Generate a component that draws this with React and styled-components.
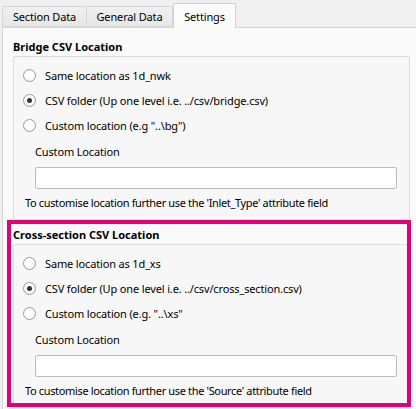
import React from "react";
import styled, { createGlobalStyle } from "styled-components";

const Global = createGlobalStyle`
  html, body {
    margin: 0;
    padding: 0;
    background: #f0f0f0;
  }
  body {
    font-family: "Noto Sans", "Liberation Sans", sans-serif;
    font-size: 11px;
    letter-spacing: -0.15px;
    color: #000;
    overflow: hidden;
  }
`;

const TabBar = styled.div`
  display: flex;
  align-items: flex-end;
  height: 27px;
  padding-left: 2px;
`;

const Tab = styled.div`
  box-sizing: border-box;
  width: ${(p) => p.$w}px;
  height: ${(p) => (p.$active ? "25px" : "21px")};
  margin-bottom: ${(p) => (p.$active ? "-1px" : "0")};
  display: flex;
  align-items: center;
  justify-content: center;
  border: 1px solid ${(p) => (p.$active ? "#cfcfcf" : "#d6d6d6")};
  border-bottom: ${(p) => (p.$active ? "none" : "1px solid #d6d6d6")};
  border-left: ${(p) => (p.$first || p.$active ? "" : "none")};
  border-radius: 2px 2px 0 0;
  background: ${(p) =>
    p.$active ? "#fbfbfb" : "linear-gradient(#f0f0f0, #e7e7e7)"};
  position: relative;
  z-index: ${(p) => (p.$active ? 1 : 0)};
  white-space: nowrap;
`;

const Pane = styled.div`
  margin-left: 2px;
  border-top: 1px solid #d6d6d6;
  border-left: 1px solid #d6d6d6;
  background: #fafafa;
  min-height: calc(100vh - 28px);
  padding: 11px 6px 0 10px;
  display: flex;
  flex-direction: column;
  gap: 7px;
`;

const Section = styled.section`
  position: relative;
`;

const Heading = styled.div`
  font-weight: bold;
  letter-spacing: 0;
  line-height: 15px;
  height: 15px;
  margin-bottom: 2px;
`;

const GroupBox = styled.div`
  border: 1px solid #dcdcdc;
  border-radius: 2px;
  background: #f7f7f7;
  padding: 6px 12px 9px 9px;
`;

const RadioRow = styled.label`
  display: flex;
  align-items: center;
  height: 25px;
  gap: 9px;
  white-space: nowrap;
`;

const RadioCircle = styled.span`
  box-sizing: border-box;
  width: 13px;
  height: 13px;
  border-radius: 50%;
  border: 1px solid #9a9a9a;
  background: radial-gradient(circle at 50% 40%, #ffffff 55%, #ececec);
  display: flex;
  align-items: center;
  justify-content: center;
  flex: none;

  &::after {
    content: "";
    width: 5px;
    height: 5px;
    border-radius: 50%;
    background: #333;
    display: ${(p) => (p.$checked ? "block" : "none")};
  }
`;

const CustomBlock = styled.div`
  margin-left: 12px;
  padding-top: 6px;
`;

const FieldLabel = styled.div`
  line-height: 15px;
  margin-bottom: 8px;
`;

const TextInput = styled.input`
  box-sizing: border-box;
  display: block;
  width: 100%;
  height: 22px;
  border: 1px solid #bcbcbc;
  border-radius: 2px;
  background: #fff;
  margin: 0;
  outline: none;
`;

const Note = styled.div`
  margin-left: 2px;
  margin-top: 6px;
  line-height: 15px;
  letter-spacing: -0.35px;
  white-space: nowrap;
`;

const Highlight = styled.div`
  position: absolute;
  left: -6px;
  right: -1px;
  top: -7px;
  bottom: 1px;
  border: 4px solid #e2007a;
  pointer-events: none;
`;

const Radio = ({ checked, children }) => (
  <RadioRow>
    <RadioCircle $checked={checked} />
    <span>{children}</span>
  </RadioRow>
);

const LocationGroup = ({ title, options, selected, note, highlight }) => (
  <Section>
    <Heading>{title}</Heading>
    <GroupBox>
      {options.map((o, i) => (
        <Radio key={o} checked={i === selected}>
          {o}
        </Radio>
      ))}
      <CustomBlock>
        <FieldLabel>Custom Location</FieldLabel>
        <TextInput type="text" />
      </CustomBlock>
      <Note>{note}</Note>
    </GroupBox>
    {highlight && <Highlight />}
  </Section>
);

export default function App() {
  return (
    <>
      <Global />
      <TabBar>
        <Tab $first $w={85}>Section Data</Tab>
        <Tab $w={86}>General Data</Tab>
        <Tab $active $w={63}>Settings</Tab>
      </TabBar>
      <Pane>
        <LocationGroup
          title="Bridge CSV Location"
          selected={1}
          options={[
            "Same location as 1d_nwk",
            "CSV folder (Up one level i.e. ../csv/bridge.csv)",
            'Custom location (e.g "..\\bg")',
          ]}
          note="To customise location further use the 'Inlet_Type' attribute field"
        />
        <LocationGroup
          title="Cross-section CSV Location"
          selected={1}
          highlight
          options={[
            "Same location as 1d_xs",
            "CSV folder (Up one level i.e. ../csv/cross_section.csv)",
            'Custom location (e.g. "..\\xs"',
          ]}
          note="To customise location further use the 'Source' attribute field"
        />
      </Pane>
    </>
  );
}
